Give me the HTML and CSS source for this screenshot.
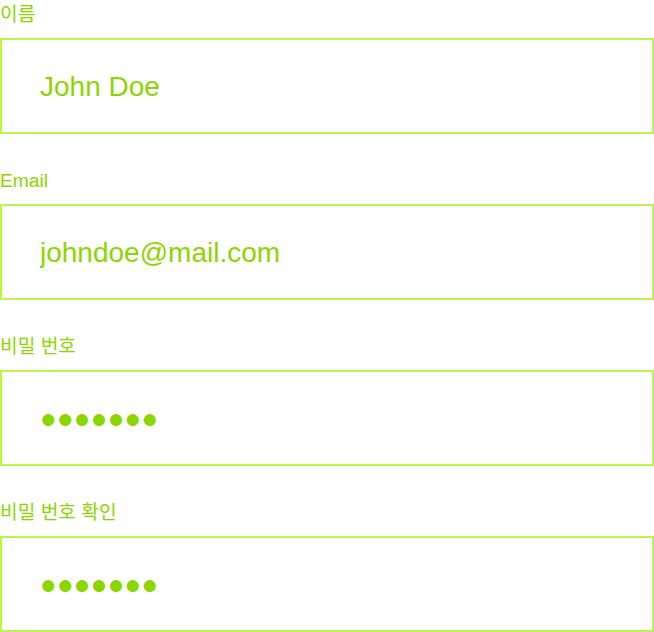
FILE: index.html
```html
<!DOCTYPE html>
<html lang="ko">
<head>
<meta charset="utf-8">
<title>Form</title>
<link rel="stylesheet" href="styles.css">
</head>
<body>
<form class="form">
  <label class="field">
    <span class="label">이름</span>
    <input class="input" type="text" value="John Doe">
  </label>
  <label class="field">
    <span class="label">Email</span>
    <input class="input" type="email" value="johndoe@mail.com">
  </label>
  <div class="field">
    <span class="label">비밀 번호</span>
    <div class="input masked" role="textbox" aria-label="비밀 번호">●●●●●●●</div>
  </div>
  <div class="field">
    <span class="label">비밀 번호 확인</span>
    <div class="input masked" role="textbox" aria-label="비밀 번호 확인">●●●●●●●</div>
  </div>
</form>
</body>
</html>
```
FILE: styles.css
```css
html, body {
  margin: 0;
  padding: 0;
  background: #ffffff;
}
body {
  font-family: "Liberation Sans", Arial, "Noto Sans CJK KR", sans-serif;
  color: #8bd600;
}
.form {
  display: flex;
  flex-direction: column;
  gap: 32px;
}
.field {
  display: flex;
  flex-direction: column;
  gap: 12px;
}
.label {
  padding-top: 4px;
  font-size: 19.2px;
  line-height: 22px;
  color: #8bd600;
}
.input {
  box-sizing: border-box;
  width: 654px;
  height: 96px;
  margin: 0;
  padding: 2px 0 0 38px;
  border: 2px solid #bcf450;
  border-radius: 0;
  outline: none;
  background: #ffffff;
  font-family: "Liberation Sans", Arial, sans-serif;
  font-size: 28px;
  color: #8bd600;
}
.masked {
  display: flex;
  align-items: center;
  padding-top: 2px;
  font-family: "Liberation Sans", "DejaVu Sans", sans-serif;
  font-size: 28px;
  letter-spacing: 0;
}
```
